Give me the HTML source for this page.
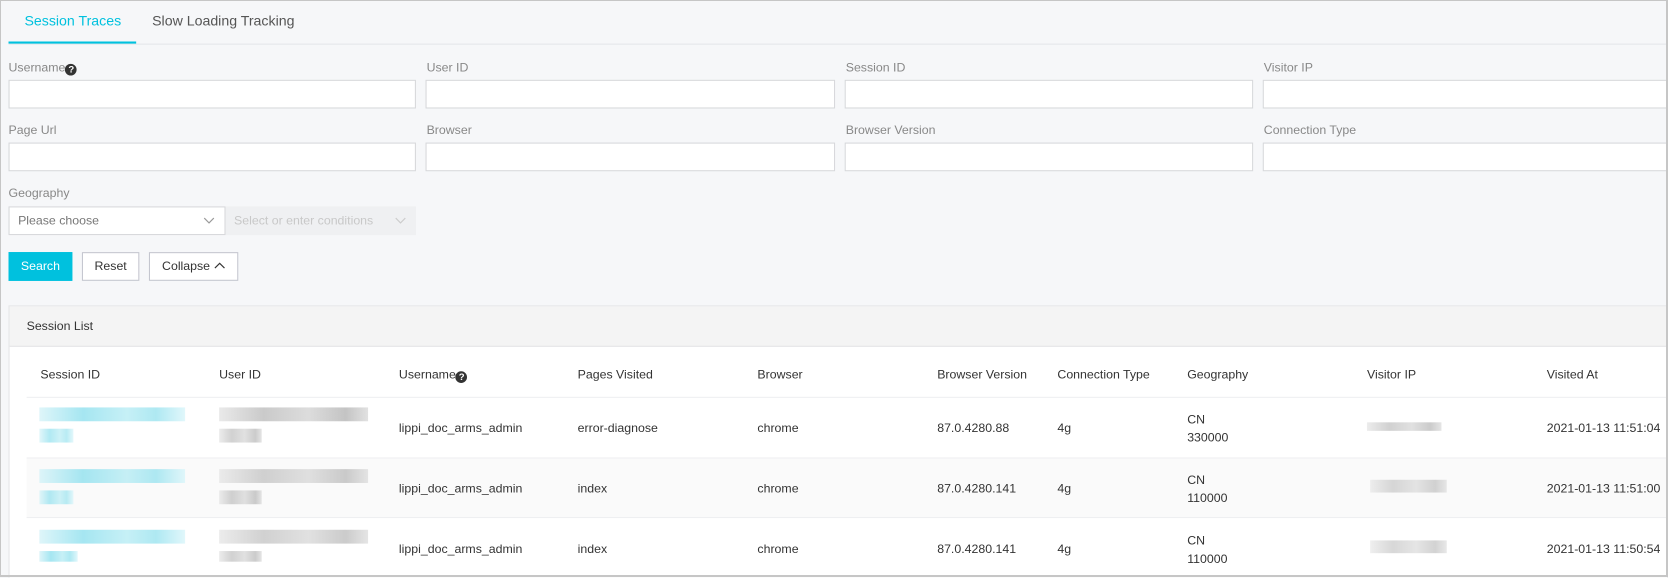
<!DOCTYPE html>
<html><head><style>
*{box-sizing:border-box;margin:0;padding:0}
body{width:1668px;height:577px;overflow:hidden;background:#f6f7f9;font-family:"Liberation Sans",Arial,sans-serif;font-size:11.6px;color:#333;position:relative}
.wrap{position:absolute;left:0;top:0;width:1568px;height:543px;transform:scale(1.0638);transform-origin:0 0;overflow:hidden}
.frame{position:absolute;left:0;top:0;width:1668px;height:577px;border:1px solid #c6c6c6;border-right:2px solid #c6c6c6;border-bottom:2px solid #c6c6c6;pointer-events:none;z-index:10}
.a{position:absolute}
.tab{font-size:13.3px}
.lbl{color:#888;font-size:11.6px}
.inp{position:absolute;height:27px;background:#fff;border:1px solid #d7d8db}
.btn{position:absolute;top:237px;height:27px;border:1px solid #c4c6cf;background:#fff;font-size:11.6px;color:#333;text-align:center;line-height:25px}
.blk{position:absolute}
.cy{background:linear-gradient(90deg,#d6f3f8,#8fe0ee 30%,#b8ecf4 60%,#9ae3ef 80%,#d9f5fa)}
.gy{background:linear-gradient(90deg,#e4e4e4,#bdbdbd 30%,#d4d4d4 60%,#b5b5b5 85%,#dadada)}
.row{position:absolute;left:25px;width:1543px;border-bottom:1px solid #eeeff1}
.q{display:inline-block;width:11px;height:11px;border-radius:50%;background:#333;color:#fff;font-size:9px;line-height:11px;text-align:center;font-weight:bold;vertical-align:-1px}
</style></head><body>
<div class="frame"></div>
<div class="wrap">
<div class="a tab" style="left:23px;top:12px;color:#00c1de">Session Traces</div>
<div class="a tab" style="left:143px;top:12px;color:#555">Slow Loading Tracking</div>
<div class="a" style="left:8px;top:41px;width:1560px;height:1px;background:#e4e6ea"></div>
<div class="a" style="left:8px;top:39px;width:120px;height:2px;background:#00c1de"></div>

<div class="a lbl" style="left:8px;top:57px">Username<span class="q">?</span></div>
<div class="a lbl" style="left:401px;top:57px">User ID</div>
<div class="a lbl" style="left:795px;top:57px">Session ID</div>
<div class="a lbl" style="left:1188px;top:57px">Visitor IP</div>
<div class="inp" style="left:8px;top:75px;width:383px"></div>
<div class="inp" style="left:400px;top:75px;width:385px"></div>
<div class="inp" style="left:794px;top:75px;width:384px"></div>
<div class="inp" style="left:1187px;top:75px;width:481px"></div>

<div class="a lbl" style="left:8px;top:116px">Page Url</div>
<div class="a lbl" style="left:401px;top:116px">Browser</div>
<div class="a lbl" style="left:795px;top:116px">Browser Version</div>
<div class="a lbl" style="left:1188px;top:116px">Connection Type</div>
<div class="inp" style="left:8px;top:134px;width:383px"></div>
<div class="inp" style="left:400px;top:134px;width:385px"></div>
<div class="inp" style="left:794px;top:134px;width:384px"></div>
<div class="inp" style="left:1187px;top:134px;width:481px"></div>

<div class="a lbl" style="left:8px;top:175px">Geography</div>
<div class="inp" style="left:8px;top:194px;width:204px;color:#777;padding-left:8px;line-height:25px">Please choose<svg style="position:absolute;right:9px;top:9px" width="11" height="7"><path d="M1 1l4.5 4.5L10 1" fill="none" stroke="#999" stroke-width="1.1"/></svg></div>
<div class="a" style="left:212px;top:194px;width:179px;height:27px;background:#eff0f2;color:#c8c8c8;padding-left:8px;line-height:27px">Select or enter conditions<svg style="position:absolute;right:9px;top:10px" width="11" height="7"><path d="M1 1l4.5 4.5L10 1" fill="none" stroke="#ccc" stroke-width="1.1"/></svg></div>

<div class="btn" style="left:8px;width:60px;background:#00c1de;border-color:#00c1de;color:#fff">Search</div>
<div class="btn" style="left:77px;width:54px">Reset</div>
<div class="btn" style="left:140px;width:84px">Collapse <svg width="11" height="7" style="vertical-align:1px"><path d="M1 6l4.5-4.5L10 6" fill="none" stroke="#333" stroke-width="1.1"/></svg></div>

<div class="a" style="left:8px;top:287px;width:1560px;height:260px;background:#fff;border:1px solid #e4e5e7"></div>
<div class="a" style="left:9px;top:288px;width:1559px;height:38px;background:#f4f4f4;border-bottom:1px solid #e4e5e7"></div>
<div class="a" style="left:25px;top:300px;color:#333">Session List</div>

<div class="row" style="top:326px;height:48px"></div>
<div class="row" style="top:430px;height:57px;background:#fafafa"></div>
<div class="row" style="top:374px;height:57px"></div>
<div class="row" style="top:487px;height:58px"></div>

<div class="a" style="top:346px;left:0;width:1568px;color:#333">
<span class="a" style="left:38px;white-space:nowrap">Session ID</span><span class="a" style="left:206px;white-space:nowrap">User ID</span><span class="a" style="left:375px;white-space:nowrap">Username<span class="q">?</span></span><span class="a" style="left:543px;white-space:nowrap">Pages Visited</span><span class="a" style="left:712px">Browser</span><span class="a" style="left:881px;white-space:nowrap">Browser Version</span><span class="a" style="left:994px;white-space:nowrap">Connection Type</span><span class="a" style="left:1116px">Geography</span><span class="a" style="left:1285px;white-space:nowrap">Visitor IP</span><span class="a" style="left:1454px;white-space:nowrap">Visited At</span>
</div>

<div class="a" style="top:396px;left:0;width:1568px;white-space:nowrap">
<span class="a" style="left:375px">lippi_doc_arms_admin</span><span class="a" style="left:543px">error-diagnose</span><span class="a" style="left:712px">chrome</span><span class="a" style="left:881px">87.0.4280.88</span><span class="a" style="left:994px">4g</span><span class="a" style="left:1116px;top:-10px;line-height:17px">CN<br>330000</span><span class="a" style="left:1454px">2021-01-13 11:51:04</span></div>
<div class="a" style="top:453px;left:0;width:1568px;white-space:nowrap">
<span class="a" style="left:375px">lippi_doc_arms_admin</span><span class="a" style="left:543px">index</span><span class="a" style="left:712px">chrome</span><span class="a" style="left:881px">87.0.4280.141</span><span class="a" style="left:994px">4g</span><span class="a" style="left:1116px;top:-10px;line-height:17px">CN<br>110000</span><span class="a" style="left:1454px">2021-01-13 11:51:00</span></div>
<div class="a" style="top:510px;left:0;width:1568px;white-space:nowrap">
<span class="a" style="left:375px">lippi_doc_arms_admin</span><span class="a" style="left:543px">index</span><span class="a" style="left:712px">chrome</span><span class="a" style="left:881px">87.0.4280.141</span><span class="a" style="left:994px">4g</span><span class="a" style="left:1116px;top:-10px;line-height:17px">CN<br>110000</span><span class="a" style="left:1454px">2021-01-13 11:50:54</span></div>

<div class="blk cy" style="left:37px;top:383px;width:137px;height:13px;opacity:.8"></div>
<div class="blk cy" style="left:37px;top:403px;width:32px;height:13px;opacity:.7"></div>
<div class="blk gy" style="left:206px;top:383px;width:140px;height:13px;opacity:.8"></div>
<div class="blk gy" style="left:206px;top:403px;width:40px;height:13px;opacity:.7"></div>
<div class="blk gy" style="left:1285px;top:397px;width:70px;height:8px;opacity:.7"></div>

<div class="blk cy" style="left:37px;top:441px;width:137px;height:13px;opacity:.8"></div>
<div class="blk cy" style="left:37px;top:461px;width:32px;height:13px;opacity:.7"></div>
<div class="blk gy" style="left:206px;top:441px;width:140px;height:13px;opacity:.7"></div>
<div class="blk gy" style="left:206px;top:461px;width:40px;height:13px;opacity:.7"></div>
<div class="blk gy" style="left:1288px;top:451px;width:72px;height:12px;opacity:.6"></div>

<div class="blk cy" style="left:37px;top:498px;width:137px;height:13px;opacity:.8"></div>
<div class="blk cy" style="left:37px;top:518px;width:36px;height:10px;opacity:.8"></div>
<div class="blk gy" style="left:206px;top:498px;width:140px;height:13px;opacity:.7"></div>
<div class="blk gy" style="left:206px;top:518px;width:40px;height:10px;opacity:.7"></div>
<div class="blk gy" style="left:1288px;top:508px;width:72px;height:12px;opacity:.6"></div>
</div>
</body></html>
